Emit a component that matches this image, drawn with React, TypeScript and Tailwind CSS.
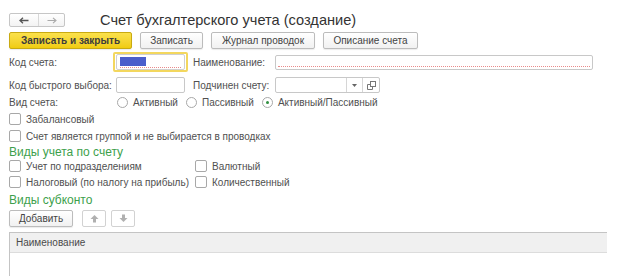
import React from 'react';

const font = "font-['Liberation_Sans',Arial,sans-serif]";

function Btn({ children, w, primary }: { children?: React.ReactNode; w: string; primary?: boolean }) {
  return (
    <div
      className={`${w} flex h-[17px] items-center justify-center whitespace-nowrap rounded-[2px] border text-[10px] leading-none ${
        primary
          ? 'border-[#c9aa12] bg-gradient-to-b from-[#fbe14a] to-[#f0cc0c] font-bold text-[#3d3d3d]'
          : 'border-[#bcbcbc] bg-gradient-to-b from-white to-[#f1f1f1] text-[#444]'
      } shadow-[0_1px_1px_rgba(0,0,0,0.08)]`}
    >
      {children}
    </div>
  );
}

function Check({ label }: { label: string }) {
  return (
    <div className="flex h-[14px] items-center gap-[5px] whitespace-nowrap">
      <div className="h-[12px] w-[12px] shrink-0 rounded-[2px] border border-[#a8a8a8] bg-white" />
      <span>{label}</span>
    </div>
  );
}

function Radio({ label, on }: { label: string; on?: boolean }) {
  return (
    <div className="flex items-center gap-[5px] whitespace-nowrap">
      <div className="flex h-[11px] w-[11px] items-center justify-center rounded-full border border-[#a8a8a8] bg-white">
        {on && <div className="h-[3px] w-[3px] rounded-full bg-[#2f8f3f]" />}
      </div>
      <span>{label}</span>
    </div>
  );
}

function Arrow({ dir }: { dir: 'up' | 'down' }) {
  return (
    <svg width="9" height="9" viewBox="0 0 9 9" className={dir === 'down' ? 'rotate-180' : ''}>
      <path d="M4.5 1 L8.5 5 L6 5 L6 8.5 L3 8.5 L3 5 L0.5 5 Z" fill="#b0b0b0" />
    </svg>
  );
}

export default function App() {
  return (
    <div className={`${font} relative h-[276px] w-[617px] overflow-hidden bg-white pl-[9px] pt-[13px] text-[10px] text-[#505050]`}>
      {/* Header */}
      <div className="flex h-[14px] items-center">
        <div className="flex h-[14px] w-[56px] rounded-[2px] border border-[#c6c6c6] bg-gradient-to-b from-white to-[#f3f3f3]">
          <div className="flex w-[29px] items-center justify-center border-r border-[#d8d8d8]">
            <svg width="10" height="7" viewBox="0 0 10 7">
              <path d="M9.5 3.5 H2 M4 0.8 L1 3.5 L4 6.2" stroke="#555" strokeWidth="1.3" fill="none" />
            </svg>
          </div>
          <div className="flex flex-1 items-center justify-center">
            <svg width="10" height="7" viewBox="0 0 10 7">
              <path d="M0.5 3.5 H8 M6 0.8 L9 3.5 L6 6.2" stroke="#aaa" strokeWidth="1.1" fill="none" />
            </svg>
          </div>
        </div>
        <div className="ml-[35px] whitespace-nowrap text-[14.6px] leading-[14px] text-[#333]">Счет бухгалтерского учета (создание)</div>
      </div>

      {/* Toolbar */}
      <div className="mt-[5px] flex gap-[8px]">
        <Btn w="w-[123px]" primary>Записать и закрыть</Btn>
        <Btn w="w-[63px]">Записать</Btn>
        <Btn w="w-[104px]">Журнал проводок</Btn>
        <Btn w="w-[95px]">Описание счета</Btn>
      </div>

      {/* Row 1 */}
      <div className="mt-[3px] flex h-[20px] items-center whitespace-nowrap">
        <div className="w-[104px]">Код счета:</div>
        <div className="flex h-[20px] w-[75px] items-center rounded-[2px] border-2 border-[#f3d75e] bg-white">
          <div className="ml-[1px] flex h-[16px] w-[69px] items-center rounded-[2px] border border-[#d0d0d0] px-[3px]">
            <div className="w-full border-b border-dotted border-[#e98b8b] pb-[1px]">
              <div className="h-[9px] w-[26px] bg-[#4a5ecb]" />
            </div>
          </div>
        </div>
        <div className="ml-[5px] w-[82px]">Наименование:</div>
        <div className="flex h-[15px] w-[318px] items-end rounded-[2px] border border-[#c8c8c8] px-[2px] pb-[2px]">
          <div className="w-full border-b border-dotted border-[#e98b8b]" />
        </div>
      </div>

      {/* Row 2 */}
      <div className="mt-[5px] flex h-[16px] items-center whitespace-nowrap">
        <div className="w-[107px]">Код быстрого выбора:</div>
        <div className="h-[16px] w-[69px] rounded-[2px] border border-[#c8c8c8]" />
        <div className="ml-[8px] w-[82px]">Подчинен счету:</div>
        <div className="flex h-[16px] w-[105px] rounded-[2px] border border-[#c8c8c8]">
          <div className="flex-1" />
          <div className="flex w-[16px] items-center justify-center border-l border-[#d6d6d6]">
            <svg width="5" height="3" viewBox="0 0 5 3">
              <path d="M0 0 H5 L2.5 3 Z" fill="#666" />
            </svg>
          </div>
          <div className="flex w-[17px] items-center justify-center border-l border-[#d6d6d6]">
            <svg width="9" height="9" viewBox="0 0 9 9" fill="none" stroke="#777" strokeWidth="1">
              <rect x="3.5" y="0.5" width="5" height="5" />
              <path d="M3.5 3.5 H0.5 V8.5 H5.5 V5.5" />
            </svg>
          </div>
        </div>
      </div>

      {/* Row 3 */}
      <div className="mt-[2px] flex h-[14px] items-center">
        <div className="w-[108px]">Вид счета:</div>
        <div className="flex gap-[8px]">
          <Radio label="Активный" />
          <Radio label="Пассивный" />
          <Radio label="Активный/Пассивный" on />
        </div>
      </div>

      <div className="mt-[3px]">
        <Check label="Забалансовый" />
      </div>
      <div className="mt-[3px]">
        <Check label="Счет является группой и не выбирается в проводках" />
      </div>

      <div className="mt-[2px] h-[14px] whitespace-nowrap text-[12px] leading-[14px] text-[#3d9f4c]">Виды учета по счету</div>
      <div className="flex">
        <div className="w-[186px]">
          <Check label="Учет по подразделениям" />
          <div className="mt-[2px]">
            <Check label="Налоговый (по налогу на прибыль)" />
          </div>
        </div>
        <div>
          <Check label="Валютный" />
          <div className="mt-[2px]">
            <Check label="Количественный" />
          </div>
        </div>
      </div>

      <div className="mt-[4px] h-[14px] whitespace-nowrap text-[12px] leading-[14px] text-[#3d9f4c]">Виды субконто</div>
      <div className="mt-[3px] flex gap-[9px]">
        <Btn w="w-[64px]">Добавить</Btn>
        <div className="flex gap-[5px]">
          <div className="flex h-[17px] w-[24px] items-center justify-center rounded-[2px] border border-[#d2d2d2] bg-white">
            <Arrow dir="up" />
          </div>
          <div className="flex h-[17px] w-[24px] items-center justify-center rounded-[2px] border border-[#d2d2d2] bg-white">
            <Arrow dir="down" />
          </div>
        </div>
      </div>

      {/* Table */}
      <div className="mt-[5px] h-[60px] w-[598px] border-l border-t border-[#c4c4c4]">
        <div className="flex h-[20px] items-center border-b border-[#dcdcdc] bg-[#f0f0f0] pl-[6px] text-[#4a4a4a]">
          Наименование
        </div>
      </div>
    </div>
  );
}
